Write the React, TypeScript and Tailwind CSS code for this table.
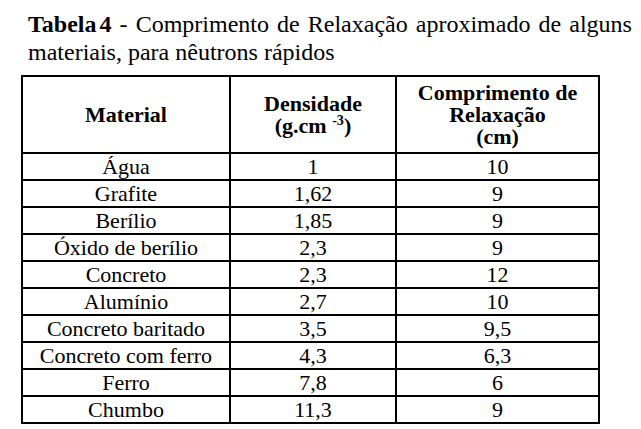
import React from "react";

const rows: [string, string, string][] = [
  ["Água", "1", "10"],
  ["Grafite", "1,62", "9"],
  ["Berílio", "1,85", "9"],
  ["Óxido de berílio", "2,3", "9"],
  ["Concreto", "2,3", "12"],
  ["Alumínio", "2,7", "10"],
  ["Concreto baritado", "3,5", "9,5"],
  ["Concreto com ferro", "4,3", "6,3"],
  ["Ferro", "7,8", "6"],
  ["Chumbo", "11,3", "9"],
];

export default function App() {
  return (
    <div
      className="w-[641px] h-[429px] bg-white text-black overflow-hidden"
      style={{ fontFamily: '"Liberation Serif", "Times New Roman", serif' }}
    >
      <div className="pl-[28px] pt-[10px] w-[632px] text-[24px] leading-[28px]">
        <div className="whitespace-nowrap flex justify-between">
          <span><b>Tabela</b><b className="ml-[3px]">4</b></span>
          <span>-</span>
          <span>Comprimento</span>
          <span>de</span>
          <span>Relaxação</span>
          <span>aproximado</span>
          <span>de</span>
          <span>alguns</span>
        </div>
        <div>materiais, para nêutrons rápidos</div>
      </div>
      <div className="ml-[21px] mt-[9px] w-[579px] border-l-2 border-t-2 border-black grid grid-cols-[208px_166px_203px] text-[22px]">
        <div className="h-[77px] border-r-2 border-b-2 border-black flex items-center justify-center font-bold leading-[22px]">
          Material
        </div>
        <div className="h-[77px] border-r-2 border-b-2 border-black flex flex-col items-center justify-center font-bold leading-[22px]">
          <div>Densidade</div>
          <div className="whitespace-nowrap">
            (g.cm <span className="text-[14px] relative -top-[8px] leading-none">-3</span>)
          </div>
        </div>
        <div className="h-[77px] border-r-2 border-b-2 border-black flex flex-col items-center justify-center font-bold leading-[22px]">
          <div>Comprimento de</div>
          <div>Relaxação</div>
          <div>(cm)</div>
        </div>
        {rows.map((r, i) => (
          <React.Fragment key={i}>
            <div className="h-[27px] border-r-2 border-b-2 border-black text-center leading-[25px]">{r[0]}</div>
            <div className="h-[27px] border-r-2 border-b-2 border-black text-center leading-[25px]">{r[1]}</div>
            <div className="h-[27px] border-r-2 border-b-2 border-black text-center leading-[25px]">{r[2]}</div>
          </React.Fragment>
        ))}
      </div>
    </div>
  );
}
